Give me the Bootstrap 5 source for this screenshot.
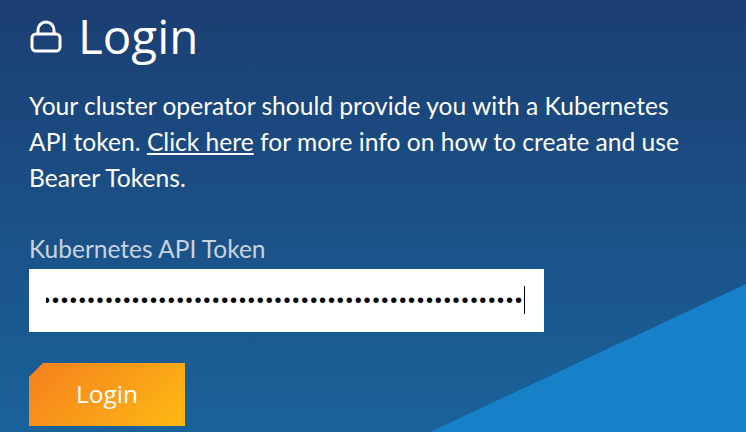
<!DOCTYPE html>
<html lang="en">
<head>
<meta charset="utf-8">
<title>Login</title>
<link href="https://cdn.jsdelivr.net/npm/bootstrap@5.3.0/dist/css/bootstrap.min.css" rel="stylesheet">
<style>
html,body{height:100%;margin:0;overflow:hidden}
body{font-family:"Lato","Open Sans",sans-serif}
.stage{position:relative;width:746px;height:432px;overflow:hidden;padding:0 29px;color:#fff;background:linear-gradient(180deg,#1b3e72 0%,#1a629a 100%)}
.stage::before{content:"";position:absolute;inset:0;background:#1681c8;clip-path:polygon(430px 432px,746px 284px,746px 432px)}
.pane{position:relative;width:660px}
.ttl{font-family:"Open Sans",sans-serif;font-size:47.5px;font-weight:500;line-height:60px;margin:6px 0 0 1px;gap:16px}
.ttl svg{width:32px;height:34px;flex:none}
.intro{font-size:24.6px;line-height:36px;margin:22px 0 0 0;height:108px}
.intro a{color:#fff}
.lbl{display:block;font-size:24.5px;line-height:30px;color:#c9d3de;margin:38px 0 5px 0}
.tokenwrap{position:relative;width:515px;height:63px}
.tokeninp{width:100%;height:63px;border:0;border-radius:0;padding:0 20px 0 17px;font-family:"Liberation Sans",sans-serif;font-size:20px;letter-spacing:1.9px;color:#000;background:#fff}
.tokeninp:focus{box-shadow:none;background:#fff;color:#000}
.caretbar{position:absolute;left:495px;top:17px;width:1px;height:28px;background:#000}
.go{display:block;width:156px;height:63px;margin-top:31px;border:0;border-radius:0;color:#fff;font-family:"Open Sans",sans-serif;font-size:24.5px;font-weight:500;padding:0;background:linear-gradient(135deg,#f5801f 0%,#feb913 100%);clip-path:polygon(14px 0,100% 0,100% 100%,0 100%,0 14px)}
.go:hover{color:#fff}
</style>
</head>
<body>
<main class="stage">
  <div class="pane">
    <h1 class="ttl d-flex align-items-center">
      <svg viewBox="0 0 32 34" fill="none" stroke="#fff" stroke-width="3" aria-hidden="true"><rect x="2" y="15" width="28" height="17" rx="4"/><path d="M8 15V11a8 8 0 0 1 16 0v4"/></svg>
      <span>Login</span>
    </h1>
    <p class="intro">Your cluster operator should provide you with a Kubernetes API token. <a href="#">Click here</a> for more info on how to create and use Bearer Tokens.</p>
    <form>
      <label class="lbl" for="tok">Kubernetes API Token</label>
      <div class="tokenwrap">
        <input id="tok" class="form-control tokeninp" type="password" value="abcdefghijklmnopqrstuvwxyzabcdefghijklmnopqrstuvwxyzabcdefghijklmnopqrstuvwxyzabcdefghijklmnopqrstuvwxyz">
        <span class="caretbar"></span>
      </div>
      <button type="button" class="btn go">Login</button>
    </form>
  </div>
</main>
<script src="https://cdn.jsdelivr.net/npm/bootstrap@5.3.0/dist/js/bootstrap.bundle.min.js"></script>
<script>document.getElementById('tok').scrollLeft=100000;</script>
</body>
</html>
